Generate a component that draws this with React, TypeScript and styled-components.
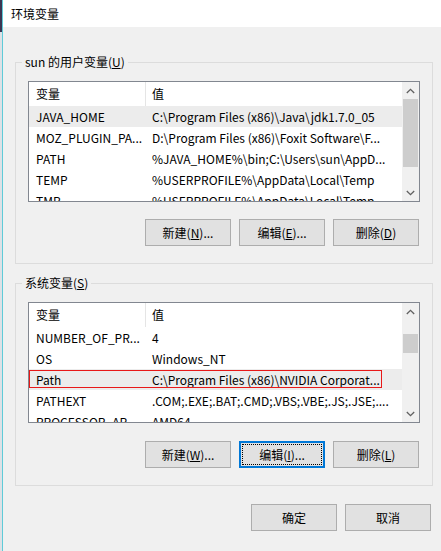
import React from 'react'
import styled, { createGlobalStyle } from 'styled-components'

const GlobalStyle = createGlobalStyle`
  html, body {
    margin: 0;
    padding: 0;
    background: #f0f0f0;
  }
  body {
    font-family: 'Noto Sans CJK SC', 'Noto Sans', sans-serif;
    font-size: 12px;
    color: #000;
  }
`

const Screen = styled.div`
  display: flex;
  width: 441px;
  height: 551px;
  overflow: hidden;
`
const Backdrop = styled.div`
  width: 2px;
  flex-shrink: 0;
  background: linear-gradient(to bottom, #3b3552 0 32px, #dde1e6 32px 100%);
`
const Window = styled.div`
  flex: 1;
  display: flex;
  flex-direction: column;
  border-left: 1px solid #5fcbd8;
  background: #f0f0f0;
`
const TitleBar = styled.div`
  height: 27px;
  flex-shrink: 0;
  background: #fff;
  display: flex;
  align-items: center;
  padding-left: 8px;
  font-size: 12px;
`
const Body = styled.div`
  flex: 1;
  display: flex;
  flex-direction: column;
  padding: 27px 0 0 0;
`
const Group = styled.fieldset<{ $gap?: number }>`
  margin: ${(p) => p.$gap ?? 0}px 8px 0 12px;
  padding: 0 12px 17px 12px;
  border: 1px solid #dcdcdc;
  min-width: 0;
  display: flex;
  flex-direction: column;
`
const Legend = styled.legend`
  margin-left: -6px;
  padding: 0 3px;
  line-height: 16px;
  height: 16px;
  font-size: 12px;
`
const ListView = styled.div`
  margin-top: 11px;
  height: 121px;
  box-sizing: border-box;
  border: 1px solid #828790;
  background: #fff;
  display: flex;
  overflow: hidden;
`
const Table = styled.div`
  flex: 1;
  min-width: 0;
  overflow: hidden;
`
const HeaderRow = styled.div`
  display: flex;
  height: 24px;
  line-height: 24px;
`
const HeaderCell = styled.div`
  width: 109px;
  padding-left: 7px;
  border-right: 1px solid #e5e5e5;
`
const HeaderValue = styled.div`
  padding-left: 6px;
`
const Row = styled.div<{ $selected?: boolean }>`
  position: relative;
  display: flex;
  height: 21px;
  line-height: 21px;
  white-space: nowrap;
  background: ${(p) => (p.$selected ? '#ececec' : 'transparent')};
`
const NameCell = styled.div`
  width: 110px;
  padding-left: 7px;
  overflow: hidden;
  flex-shrink: 0;
`
const ValueCell = styled.div`
  padding-left: 6px;
  overflow: hidden;
`
const Marker = styled.div`
  position: absolute;
  left: 0;
  top: 1px;
  width: 353px;
  height: 18px;
  box-sizing: border-box;
  border: 1px solid #e81818;
`
const ScrollBar = styled.div`
  width: 17px;
  flex-shrink: 0;
  background: #f0f0f0;
  display: flex;
  flex-direction: column;
`
const ArrowBox = styled.div`
  height: 17px;
  display: flex;
  align-items: center;
  justify-content: center;
`
const Track = styled.div`
  flex: 1;
  display: flex;
  flex-direction: column;
  align-items: center;
`
const Thumb = styled.div<{ $top: number; $height: number }>`
  width: 15px;
  margin-top: ${(p) => p.$top}px;
  height: ${(p) => p.$height}px;
  background: #cdcdcd;
`
const ButtonRow = styled.div<{ $gap: number; $right?: number }>`
  display: flex;
  justify-content: flex-end;
  gap: 8px;
  margin-top: ${(p) => p.$gap}px;
  margin-right: ${(p) => p.$right ?? 1}px;
`
const Button = styled.button<{ $focused?: boolean }>`
  width: 86px;
  height: 27px;
  box-sizing: border-box;
  padding: 0;
  background: #e1e1e1;
  border: ${(p) => (p.$focused ? '2px solid #0078d7' : '1px solid #adadad')};
  outline: ${(p) => (p.$focused ? '1px dotted #000' : 'none')};
  outline-offset: -4px;
  font-family: 'Noto Sans CJK SC', 'Noto Sans', sans-serif;
  font-size: 12px;
  color: #000;
`
const Key = styled.span`
  text-decoration: underline;
`

function Chevron({ up }: { up?: boolean }) {
  return (
    <svg width='9' height='6' viewBox='0 0 9 6'>
      <polyline
        points={up ? '0.8,5 4.5,1.3 8.2,5' : '0.8,1 4.5,4.7 8.2,1'}
        fill='none'
        stroke='#606060'
        strokeWidth='1.3'
      />
    </svg>
  )
}

type Item = { name: string; value: string; selected?: boolean; marked?: boolean }

const userVars: Item[] = [
  { name: 'JAVA_HOME', value: 'C:\\Program Files (x86)\\Java\\jdk1.7.0_05', selected: true },
  { name: 'MOZ_PLUGIN_PA...', value: 'D:\\Program Files (x86)\\Foxit Software\\F...' },
  { name: 'PATH', value: '%JAVA_HOME%\\bin;C:\\Users\\sun\\AppD...' },
  { name: 'TEMP', value: '%USERPROFILE%\\AppData\\Local\\Temp' },
  { name: 'TMP', value: '%USERPROFILE%\\AppData\\Local\\Temp' },
]

const systemVars: Item[] = [
  { name: 'NUMBER_OF_PR...', value: '4' },
  { name: 'OS', value: 'Windows_NT' },
  { name: 'Path', value: 'C:\\Program Files (x86)\\NVIDIA Corporat...', selected: true, marked: true },
  { name: 'PATHEXT', value: '.COM;.EXE;.BAT;.CMD;.VBS;.VBE;.JS;.JSE;....' },
  { name: 'PROCESSOR_AR...', value: 'AMD64' },
]

function VarList({ items, thumbTop, thumbHeight }: { items: Item[]; thumbTop: number; thumbHeight: number }) {
  return (
    <ListView>
      <Table>
        <HeaderRow>
          <HeaderCell>变量</HeaderCell>
          <HeaderValue>值</HeaderValue>
        </HeaderRow>
        {items.map((it) => (
          <Row key={it.name} $selected={it.selected}>
            <NameCell>{it.name}</NameCell>
            <ValueCell>{it.value}</ValueCell>
            {it.marked && <Marker />}
          </Row>
        ))}
      </Table>
      <ScrollBar>
        <ArrowBox>
          <Chevron up />
        </ArrowBox>
        <Track>
          <Thumb $top={thumbTop} $height={thumbHeight} />
        </Track>
        <ArrowBox>
          <Chevron />
        </ArrowBox>
      </ScrollBar>
    </ListView>
  )
}

export default function App() {
  return (
    <Screen>
      <GlobalStyle />
      <Backdrop />
      <Window>
        <TitleBar>环境变量</TitleBar>
        <Body>
          <Group>
            <Legend>
              sun 的用户变量(<Key>U</Key>)
            </Legend>
            <VarList items={userVars} thumbTop={0} thumbHeight={68} />
            <ButtonRow $gap={17}>
              <Button type='button'>
                新建(<Key>N</Key>)...
              </Button>
              <Button type='button'>
                编辑(<Key>E</Key>)...
              </Button>
              <Button type='button'>
                删除(<Key>D</Key>)
              </Button>
            </ButtonRow>
          </Group>
          <Group $gap={11}>
            <Legend>
              系统变量(<Key>S</Key>)
            </Legend>
            <VarList items={systemVars} thumbTop={14} thumbHeight={19} />
            <ButtonRow $gap={18}>
              <Button type='button'>
                新建(<Key>W</Key>)...
              </Button>
              <Button type='button' $focused>
                编辑(<Key>I</Key>)...
              </Button>
              <Button type='button'>
                删除(<Key>L</Key>)
              </Button>
            </ButtonRow>
          </Group>
          <ButtonRow $gap={18} $right={10}>
            <Button type='button'>确定</Button>
            <Button type='button'>取消</Button>
          </ButtonRow>
        </Body>
      </Window>
    </Screen>
  )
}
